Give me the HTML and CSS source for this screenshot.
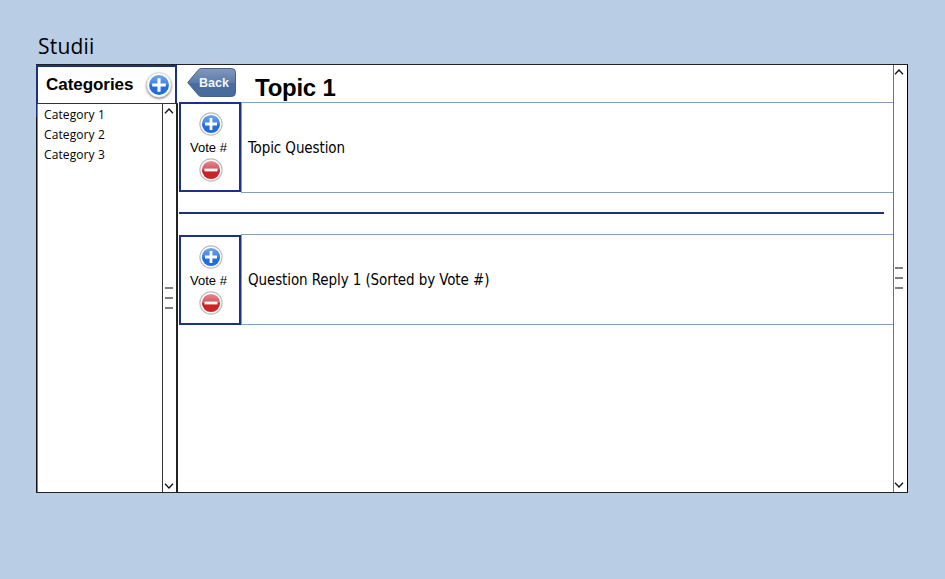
FILE: index.html
```html
<!DOCTYPE html>
<html lang="en">
<head>
<meta charset="utf-8">
<title>Studii</title>
<link rel="stylesheet" href="styles.css">
</head>
<body>
<svg class="defs" aria-hidden="true">
  <defs>
    <linearGradient id="blue" x1="0" y1="0" x2="0" y2="1"><stop offset="0" stop-color="#6ea5ee"/><stop offset=".48" stop-color="#4283e4"/><stop offset=".52" stop-color="#2370df"/><stop offset="1" stop-color="#1f6ae0"/></linearGradient>
    <linearGradient id="red" x1="0" y1="0" x2="0" y2="1"><stop offset="0" stop-color="#e38a8e"/><stop offset=".48" stop-color="#d6555a"/><stop offset=".52" stop-color="#c92528"/><stop offset="1" stop-color="#d02222"/></linearGradient>
    <linearGradient id="steel" x1="0" y1="0" x2="0" y2="1"><stop offset="0" stop-color="#8299bd"/><stop offset=".5" stop-color="#5c7bab"/><stop offset=".52" stop-color="#4a6c9f"/><stop offset="1" stop-color="#486b9d"/></linearGradient>
    <symbol id="plus" viewBox="0 0 24 24"><circle cx="12" cy="12" r="11.1" fill="#fff" stroke="#bdbdbd" stroke-width="1.2"/><circle cx="12" cy="12" r="9.1" fill="url(#blue)"/><path d="M12 6v12M6 12h12" stroke="#fff" stroke-width="2.8"/></symbol>
    <symbol id="minus" viewBox="0 0 24 24"><circle cx="12" cy="12" r="11.1" fill="#fff" stroke="#bdbdbd" stroke-width="1.2"/><circle cx="12" cy="12" r="9.1" fill="url(#red)"/><path d="M5.5 12h13" stroke="#fff" stroke-width="2.8"/></symbol>
    <symbol id="plus-raised" viewBox="0 0 24 24"><circle cx="12" cy="12" r="11.3" fill="#fff" stroke="#d8d8d8" stroke-width=".8"/><circle cx="12" cy="12" r="9.2" fill="url(#blue)"/><path d="M12 5.700v12.600M5.700 12h12.600" stroke="#fff" stroke-width="2.900"/></symbol>
  </defs>
</svg>
<h1 class="title">Studii</h1>
<div class="window">
  <aside class="sidebar">
    <header class="side-head">
      <h2>Categories</h2>
      <svg class="add"><use href="#plus-raised"/></svg>
    </header>
    <div class="side-body">
      <ul class="list"><li>Category 1</li><li>Category 2</li><li>Category 3</li></ul>
      <div class="scroll scroll-side">
        <svg class="arrow" viewBox="0 0 10 6"><path d="M1 5.2 5 1l4 4.2"/></svg>
        <span class="grip"></span>
        <svg class="arrow" viewBox="0 0 10 6"><path d="M1 .8 5 5 9 .8"/></svg>
      </div>
    </div>
  </aside>
  <main class="main">
    <header class="topic-head">
      <div class="back">
        <svg class="back-shape" viewBox="0 0 49 29"><path d="M.7 14.5 11 2.3Q12.4.5 14.5.5H44.500Q48.500.5 48.500 4.500V24.500Q48.500 28.500 44.500 28.500H14.500Q12.400 28.500 11 26.700Z" fill="url(#steel)" stroke="#476087"/></svg>
        <span>Back</span>
      </div>
      <h2>Topic 1</h2>
    </header>
    <section class="post">
      <div class="vote"><svg><use href="#plus"/></svg><span>Vote #</span><svg><use href="#minus"/></svg></div>
      <p class="text question">Topic Question</p>
    </section>
    <hr class="rule">
    <section class="post reply">
      <div class="vote"><svg><use href="#plus"/></svg><span>Vote #</span><svg><use href="#minus"/></svg></div>
      <p class="text answer">Question Reply 1 (Sorted by Vote #)</p>
    </section>
  </main>
  <div class="scroll scroll-main">
    <svg class="arrow" viewBox="0 0 10 6"><path d="M1 5.200 5 1l4 4.200"/></svg>
    <span class="grip"></span>
    <svg class="arrow" viewBox="0 0 10 6"><path d="M1 .8 5 5 9 .8"/></svg>
  </div>
</div>
</body>
</html>
```
FILE: styles.css
```css
* { box-sizing: border-box; }
body {
  margin: 0;
  height: 579px;
  padding: 32px 37px 0 36px;
  overflow: hidden;
  background: #b9cde4;
  color: #000;
  font-family: "Liberation Sans", Arial, sans-serif;
}
h1, h2, p, ul { margin: 0; padding: 0; font-weight: inherit; }
svg { display: block; }
.defs { position: absolute; width: 0; height: 0; }

.title {
  height: 32px;
  padding-left: 2px;
  font: 21px/28px "Comic Sans MS", "Open Sans", sans-serif;
  letter-spacing: .2px;
}

.window {
  display: grid;
  grid-template-columns: 142px 715px 15px;
  width: 872px;
  height: 429px;
  background: #fff;
  border-top: 1px solid #222;
  border-bottom: 1px solid #222;
}

.sidebar { display: flex; flex-direction: column; }
.side-head {
  display: flex;
  align-items: center;
  justify-content: space-between;
  width: 141px;
  height: 38px;
  padding: 0 3px 0 8px;
  border: 2px solid #1b3281;
  border-bottom: 0;
}
.side-head h2 { font-size: 17px; font-weight: bold; line-height: 20px; letter-spacing: -.05px; }
.add { width: 26px; height: 26px; margin-top: -1px; overflow: visible; filter: drop-shadow(0 1px 1px rgba(0, 0, 0, .55)); }
.side-body {
  flex: 1;
  display: flex;
  justify-content: space-between;
  padding-left: 1px;
  border-top: 1px solid #333;
  background: linear-gradient(#1b3281 13px, #111 13px) left / 1px 100% no-repeat;
}
.list {
  flex: 1;
  padding: 1px 0 0 6px;
  list-style: none;
  border-left: 1px solid #808080;
  font: 12px/20px "Comic Sans MS", "Open Sans", sans-serif;
  letter-spacing: .1px;
}

.scroll {
  display: flex;
  flex-direction: column;
  align-items: center;
  justify-content: space-between;
  width: 16px;
  padding: 4px 1px 3px 0;
  border: 1px solid #333;
}
.scroll-side { border-width: 0 2px 0 1px; border-right-color: #222; }
.scroll-main { width: 15px; padding: 4px 4px 4px 0; border-width: 0 1px 0 1px; border-left-color: #707070; border-right-color: #000; }
.arrow { width: 10px; height: 6px; fill: none; stroke: #111; stroke-width: 1.3; }
.grip {
  width: 8px;
  height: 22px;
  margin-top: -2px;
  background: repeating-linear-gradient(#808080 0 2px, transparent 2px 10px);
}

.main { padding-left: 1px; }
.topic-head { display: flex; height: 37px; padding: 3px 0 0 8px; }
.back { display: grid; width: 49px; height: 29px; }
.back > * { grid-area: 1 / 1; }
.back-shape { width: 49px; height: 29px; }
.back span {
  z-index: 1;
  padding-left: 12px;
  color: #f4f6fa;
  font: bold 12.5px/31px "Liberation Sans", sans-serif;
}
.topic-head h2 { margin-left: 19px; font-size: 24px; font-weight: bold; line-height: 39px; letter-spacing: -.25px; }
.post { display: flex; height: 91px; }
.vote {
  display: flex;
  flex-direction: column;
  align-items: center;
  width: 62px;
  height: 90px;
  padding: 8px 0 0 2px;
  border: 2px solid #1b3281;
  font-size: 13px;
}
.vote svg { width: 24px; height: 24px; }
.vote span { height: 22px; margin-left: -5px; line-height: 24px; }
.text {
  flex: 1;
  padding-left: 6px;
  border: 1px solid #829fbd;
  border-right: 0;
  font: 15px/91px "DejaVu Sans Condensed", "DejaVu Sans", sans-serif;
  font-stretch: condensed;
  letter-spacing: -.1px;
  white-space: nowrap;
}
.rule { width: 705px; height: 2px; margin: 19px 0 20px; border: 0; background: #1b3281; }
.reply .vote { margin-top: 1px; }
```
